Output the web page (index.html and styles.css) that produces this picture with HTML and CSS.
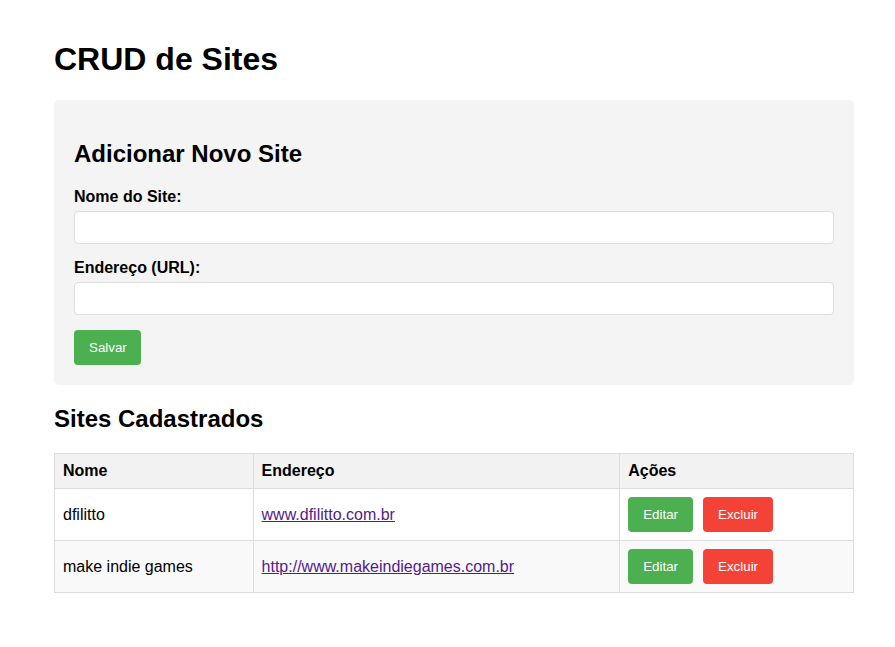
FILE: index.html
```html
<!DOCTYPE html>
<html lang="pt-BR">
<head>
<meta charset="utf-8">
<title>CRUD de Sites</title>
<link rel="stylesheet" href="styles.css">
</head>
<body>
<div class="container">
  <h1 class="title">CRUD de Sites</h1>
  <form class="form-box">
    <h2 class="section-title">Adicionar Novo Site</h2>
    <label class="label" for="nome">Nome do Site:</label>
    <input class="input" type="text" id="nome">
    <label class="label" for="url">Endereço (URL):</label>
    <input class="input" type="text" id="url">
    <button class="btn btn-green btn-save" type="button">Salvar</button>
  </form>
  <h2 class="section-title list-title">Sites Cadastrados</h2>
  <table class="table">
    <thead>
      <tr>
        <th class="col-nome">Nome</th>
        <th class="col-url">Endereço</th>
        <th class="col-acoes">Ações</th>
      </tr>
    </thead>
    <tbody>
      <tr>
        <td>dfilitto</td>
        <td><a class="link" href="#">www.dfilitto.com.br</a></td>
        <td><div class="actions"><button class="btn btn-green" type="button">Editar</button><button class="btn btn-red" type="button">Excluir</button></div></td>
      </tr>
      <tr class="alt">
        <td>make indie games</td>
        <td><a class="link" href="#">http://www.makeindiegames.com.br</a></td>
        <td><div class="actions"><button class="btn btn-green" type="button">Editar</button><button class="btn btn-red" type="button">Excluir</button></div></td>
      </tr>
    </tbody>
  </table>
</div>
</body>
</html>
```

FILE: styles.css
```css
* { box-sizing: border-box; }
html, body { margin: 0; padding: 0; background: #fff; }
body {
  font-family: "Liberation Sans", Arial, sans-serif;
  color: #000;
}
.container {
  width: 800px;
  margin-left: 54px;
  padding-top: 41px;
}
.title {
  font-size: 32px;
  font-weight: bold;
  margin: 0 0 22px 0;
}
.form-box {
  background: #f4f4f4;
  border-radius: 5px;
  padding: 20px;
  margin: 0 0 20px 0;
}
.section-title {
  font-size: 24px;
  font-weight: bold;
  margin: 20px 0 20px 0;
}
.list-title {
  margin: 0 0 20px 0;
}
.label {
  display: block;
  font-weight: bold;
  font-size: 16px;
  margin-bottom: 5px;
}
.input {
  display: block;
  width: 100%;
  padding: 8px;
  font-size: 13.333px;
  font-family: "Liberation Sans", Arial, sans-serif;
  border: 1px solid #ddd;
  border-radius: 4px;
  background: #fff;
  margin: 0 0 15px 0;
  height: 33px;
}
.btn {
  display: inline-block;
  border: none;
  border-radius: 4px;
  color: #fff;
  font-family: "Liberation Sans", Arial, sans-serif;
  font-size: 13.333px;
  padding: 10px 15px;
  line-height: 15px;
  height: 35px;
  cursor: pointer;
}
.btn-save { padding: 10px 14px 10px 15px; }
.btn-green { background: #4caf50; }
.btn-red { background: #f44336; }
.table {
  width: 800px;
  border-collapse: collapse;
  font-size: 16px;
}
.table th, .table td {
  border: 1px solid #ddd;
  padding: 8px;
  text-align: left;
}
.table th {
  background: #f2f2f2;
  font-weight: bold;
}
.col-nome { width: 199px; }
.col-url { width: 367px; }
.col-acoes { width: 234px; }
.table tr.alt td { background: #f9f9f9; }
.link { color: #551a8b; }
.actions { display: flex; gap: 10px; }
```
